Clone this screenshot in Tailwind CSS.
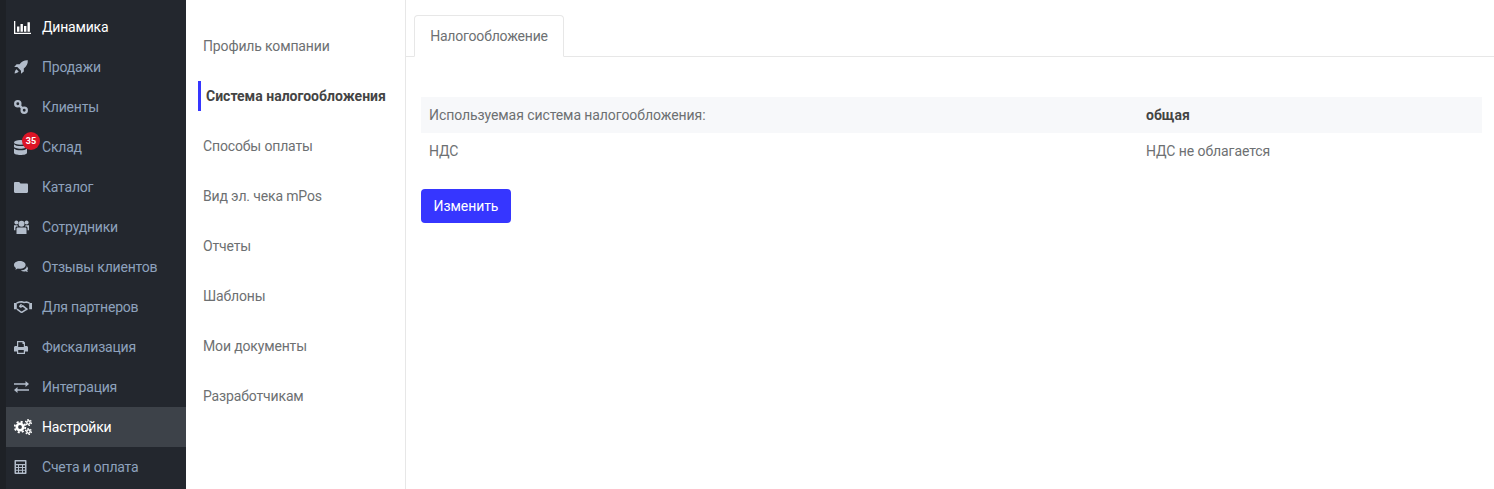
<!DOCTYPE html>
<html lang="ru">
<head>
<meta charset="UTF-8">
<title>Настройки</title>
<script src="https://cdn.jsdelivr.net/npm/@tailwindcss/browser@4"></script>
</head>
<body class="h-[489px] overflow-hidden bg-white font-['Roboto',sans-serif] text-sm text-[#6d7072]">
<div class="flex h-[489px]">
  <!-- sidebar -->
  <aside class="w-[186px] shrink-0 bg-[#23272e] border-l-[6px] border-[#1e2126] pt-[7px] text-[#8ea2bd] tracking-[-0.2px]">
    <a class="flex h-10 items-center text-white">
      <span class="w-9 pl-2 shrink-0 text-white"><svg class="w-[17px] h-[13px]" viewBox="0 0 17 13" fill="currentColor"><path d="M0 0h1.300v11.700H17V13H0zM3 5.500h2.400v5.200H3zM6.500 3h2.400v7.700H6.500zM10 5h2.400v5.700H10zM13.500 1.200h2.400v9.500h-2.400z"/></svg></span>Динамика
    </a>
    <a class="flex h-10 items-center">
      <span class="w-9 pl-2 shrink-0 text-[#b3bdcb]"><svg class="w-[14px] h-[14px]" viewBox="0 0 14 14" fill="currentColor"><path d="M13.800 0.200C10.500 0 7.600 1.300 5.600 4.200H2.600L0.200 7h3.100l3.700 3.700v3.100l2.800-2.400V8.400c2.900-2 4.200-4.900 4-8.200zM2.500 9.300C1.300 10 .8 11.700.6 13.400c1.700-.2 3.400-.7 4.100-1.900z"/></svg></span>Продажи
    </a>
    <a class="flex h-10 items-center">
      <span class="w-9 pl-2 shrink-0 text-[#b3bdcb]"><svg class="w-[14px] h-[14px]" viewBox="0 0 14 14" fill="none" stroke="currentColor" stroke-width="2.300"><circle cx="3.800" cy="3.800" r="2.600"/><circle cx="10.200" cy="10.200" r="2.600"/><path d="M5.600 5.600l2.800 2.800"/></svg></span>Клиенты
    </a>
    <a class="relative flex h-10 items-center">
      <span class="w-9 pl-2 shrink-0 text-[#b3bdcb]"><svg class="w-[13px] h-[15px]" viewBox="0 0 13 15" fill="currentColor"><ellipse cx="6.500" cy="2.400" rx="6.500" ry="2.400"/><path d="M0 4.300c1 1.300 3.800 1.800 6.500 1.800s5.500-.5 6.500-1.800v2.300c0 1.300-2.900 2.200-6.500 2.200S0 7.900 0 6.600zM0 8.500c1 1.300 3.800 1.800 6.500 1.800s5.500-.5 6.500-1.800v4.200C13 14 10.100 15 6.500 15S0 14 0 12.700z"/></svg></span>Склад
      <span class="absolute left-[16px] top-[5px] flex h-[18px] w-[18px] items-center justify-center rounded-full bg-[#dc1526] text-[9px] font-bold tracking-normal text-white">35</span>
    </a>
    <a class="flex h-10 items-center">
      <span class="w-9 pl-2 shrink-0 text-[#b3bdcb]"><svg class="w-[14px] h-[11px]" viewBox="0 0 14 11" fill="currentColor"><path d="M1.200 0h4l1.300 1.600h6.300c.7 0 1.200.5 1.200 1.200v7c0 .7-.5 1.200-1.200 1.200H1.200C.5 11 0 10.500 0 9.800V1.200C0 .5.500 0 1.200 0z"/></svg></span>Каталог
    </a>
    <a class="flex h-10 items-center">
      <span class="w-9 pl-2 shrink-0 text-[#b3bdcb]"><svg class="w-[15px] h-[14px]" viewBox="0 0 15 14" fill="currentColor"><circle cx="7.500" cy="3.800" r="3"/><circle cx="2.400" cy="2.400" r="2"/><circle cx="12.600" cy="2.400" r="2"/><path d="M3.800 7.600h7.400c.8 0 1.300.6 1.300 1.300V14h-10V8.900c0-.7.500-1.300 1.300-1.300zM0 5.200h3.400l.8 1.400H2.400c-.7.500-1 1-1 1.700v1.900H0zM15 5.200h-3.400l-.8 1.400h1.800c.7.500 1 1 1 1.700v1.900H15z"/></svg></span>Сотрудники
    </a>
    <a class="flex h-10 items-center">
      <span class="w-9 pl-2 shrink-0 text-[#b3bdcb]"><svg class="w-[15px] h-[12px]" viewBox="0 0 15 12" fill="currentColor"><path d="M5.800 0C2.600 0 0 1.700 0 3.900c0 1.200.8 2.300 2 3-.2.700-.6 1.300-1 1.700 1 0 2-.4 2.800-1 .6.100 1.300.2 2 .2 3.200 0 5.800-1.700 5.800-3.900S9 0 5.800 0z"/><path d="M12.800 5c0 2.500-2.700 4.300-6 4.500.9.700 2.100 1 3.400 1 .5 0 1-.1 1.500-.2.600.5 1.400.7 2.300.7-.4-.4-.7-.9-.8-1.400.5-.5.800-1.200.8-2 0-1-.6-1.900-1.700-2.600z"/></svg></span>Отзывы клиентов
    </a>
    <a class="flex h-10 items-center">
      <span class="w-9 pl-2 shrink-0 text-[#b3bdcb]"><svg class="w-[18px] h-3" viewBox="0 0 18 12" fill="none" stroke="currentColor" stroke-width="1.500"><path d="M2.500 2l3-1 2.200-.3 2.300.8 2.500-.5 3 1M3 8.200l4 2.800c1 .4 1.600 0 2-.5l4.500-2.800M7.500 3.300L5.800 5.300c.8 1 2 .6 3-.5l4.700 3.800"/><path fill="currentColor" stroke="none" d="M0 2h2.800v6.300H0zM15.200 2H18v6.300h-2.800z"/></svg></span>Для партнеров
    </a>
    <a class="flex h-10 items-center">
      <span class="w-9 pl-2 shrink-0 text-[#b3bdcb]"><svg class="w-[14px] h-[13px]" viewBox="0 0 14 13" fill="currentColor" fill-rule="evenodd"><path d="M3 0h6.500L11 1.500V5h1.500C13.300 5 14 5.700 14 6.500V10.500h-3V13H3v-2.500H0v-4C0 5.700.7 5 1.500 5H3zM4.200 1.200V6h5.600V3H8.500V1.200zM4.200 9v2.800h5.600V9z"/></svg></span>Фискализация
    </a>
    <a class="flex h-10 items-center">
      <span class="w-9 pl-2 shrink-0 text-[#b3bdcb]"><svg class="w-[15px] h-[12px]" viewBox="0 0 15 12" fill="currentColor"><path d="M0 2.200h11.500V0L15 3l-3.500 3V3.800H0zM15 8.200H3.500V6L0 9l3.500 3V9.800H15z"/></svg></span>Интеграция
    </a>
    <a class="flex h-10 items-center bg-[#3d4249] text-white">
      <span class="w-9 pl-2 shrink-0"><svg class="w-[18px] h-4" viewBox="0 0 18 16" fill="none" stroke="currentColor"><circle cx="6" cy="8" r="3.200" stroke-width="2.600"/><circle cx="6" cy="8" r="5.300" stroke-width="1.800" stroke-dasharray="2.100 2.060"/><circle cx="14.500" cy="3.500" r="1.700" stroke-width="1.500"/><circle cx="14.500" cy="3.500" r="3" stroke-width="1.200" stroke-dasharray="1.500 1.640"/><circle cx="14.500" cy="12.500" r="1.700" stroke-width="1.500"/><circle cx="14.500" cy="12.500" r="3" stroke-width="1.200" stroke-dasharray="1.500 1.640"/></svg></span>Настройки
    </a>
    <a class="flex h-10 items-center">
      <span class="w-9 pl-2 shrink-0 text-[#b3bdcb]"><svg class="w-[13px] h-[14px]" viewBox="0 0 12 14" fill="currentColor" fill-rule="evenodd"><path d="M1 0h10c.6 0 1 .4 1 1v12c0 .6-.4 1-1 1H1c-.6 0-1-.4-1-1V1c0-.6.400-1 1-1zM1.500 1.500v2.500h9V1.500zM1.500 5.200v1.800h2V5.200zM4.500 5.200v1.800h3V5.200zM8.500 5.200v1.800h2V5.200zM1.500 8v1.800h2V8zM4.500 8v1.800h3V8zM8.500 8v1.800h2V8zM1.500 10.800v1.800h2v-1.800zM4.500 10.800v1.800h3v-1.800zM8.500 10.800v1.800h2v-1.800z"/></svg></span>Счета и оплата
    </a>
  </aside>

  <!-- settings menu -->
  <nav class="w-[220px] shrink-0 border-r border-[#e7e7e7] pt-[21px] pl-[12px] tracking-[-0.15px]">
    <a class="flex h-[50px] items-center pl-[5px]">Профиль компании</a>
    <a class="flex h-[50px] items-center"><span class="flex h-[30px] items-center border-l-[3px] border-[#3636ff] pl-[5px] font-bold tracking-normal text-[#444]">Система налогообложения</span></a>
    <a class="flex h-[50px] items-center pl-[5px]">Способы оплаты</a>
    <a class="flex h-[50px] items-center pl-[5px]">Вид эл. чека mPos</a>
    <a class="flex h-[50px] items-center pl-[5px]">Отчеты</a>
    <a class="flex h-[50px] items-center pl-[5px]">Шаблоны</a>
    <a class="flex h-[50px] items-center pl-[5px]">Мои документы</a>
    <a class="flex h-[50px] items-center pl-[5px]">Разработчикам</a>
  </nav>

  <!-- content -->
  <main class="flex-1 min-w-0">
    <div class="h-[57px] border-b border-[#e7e7e7] pt-[15px] pl-2">
      <div class="flex h-[42px] w-[150px] items-center justify-center rounded-t border border-b-white border-[#e7e7e7] bg-white tracking-[-0.2px]">Налогообложение</div>
    </div>
    <div class="pl-[15px] pr-3 pt-10 tracking-[-0.08px]">
      <div class="flex h-9 items-center bg-[#f7f8fa] pl-2">
        <div class="w-[717px]">Используемая система налогообложения:</div>
        <div class="font-bold tracking-normal text-[#444]">общая</div>
      </div>
      <div class="flex h-9 items-center pl-2">
        <div class="w-[717px]">НДС</div>
        <div>НДС не облагается</div>
      </div>
      <button class="mt-5 h-[34px] w-[90px] rounded bg-[#3636ff] text-white">Изменить</button>
    </div>
  </main>
</div>
</body>
</html>
